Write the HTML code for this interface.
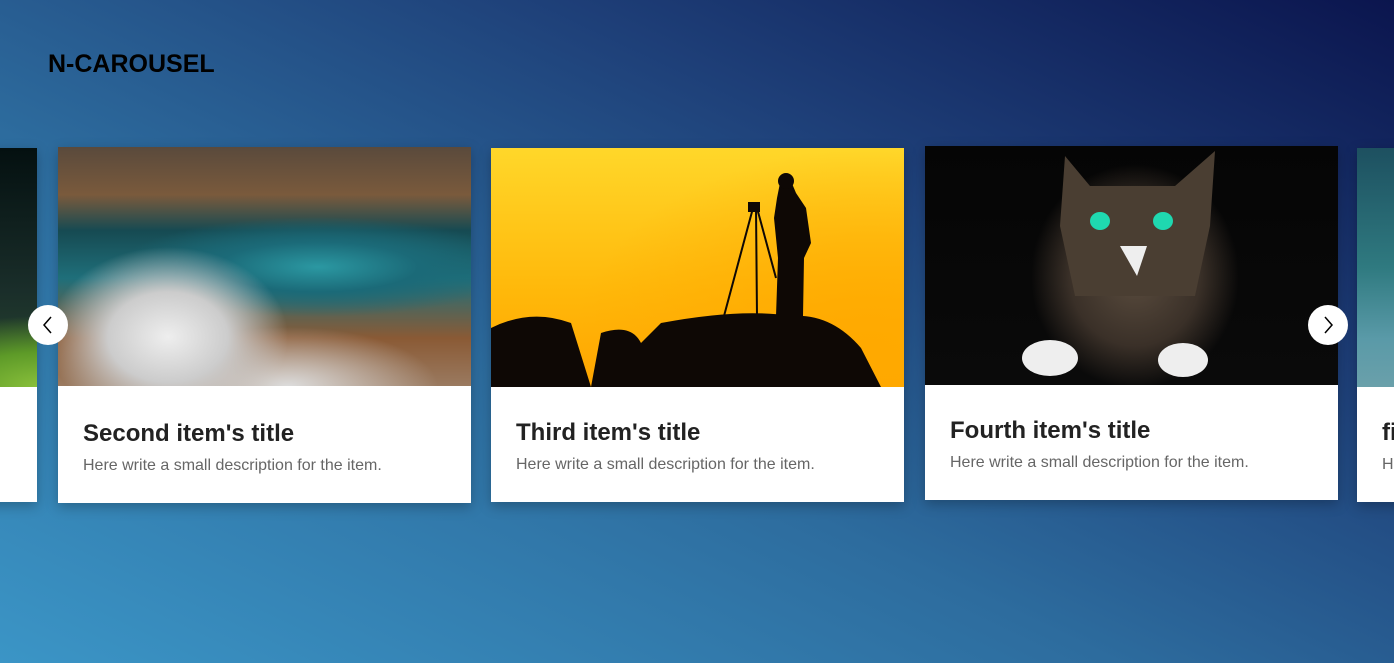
<!DOCTYPE html>
<html><head><meta charset="utf-8"><style>
*{margin:0;padding:0;box-sizing:border-box}
body{width:1394px;height:663px;overflow:hidden;position:relative;font-family:"Liberation Sans",sans-serif;
background:linear-gradient(to top right,#3b95c6 0%,#2d6c9e 40%,#1e3f78 70%,#0b154e 100%);}
h1{position:absolute;left:48px;top:50px;font-size:25px;font-weight:bold;color:#000;letter-spacing:0}
.card{position:absolute;width:413px;background:#fff;box-shadow:0 4px 12px rgba(0,0,0,.25);overflow:hidden}
.img{width:100%;height:239px}
.t{position:absolute;left:25px;font-size:24px;font-weight:bold;color:#222}
.d{position:absolute;left:25px;font-size:16px;color:#666}
.btn{position:absolute;width:40px;height:40px;border-radius:50%;background:#fff;top:305px}
.btn svg{position:absolute;left:12px;top:10px}
</style></head><body>
<h1>N-CAROUSEL</h1>
<div class="card" style="left:-376px;top:148px;height:354px">
<div class="img" style="background:radial-gradient(ellipse 300px 120px at 420px 240px,#8cc23c 0%,#5d9a28 30%,transparent 60%),linear-gradient(#041010,#1a2e2a 60%,#2a4a30)"></div></div>
<div class="card" style="left:58px;top:147px;height:356px">
<div class="img" style="background:radial-gradient(ellipse 120px 90px at 110px 190px,#eee 0%,#ccc 50%,transparent 100%),radial-gradient(ellipse 150px 60px at 230px 240px,#ddd 0%,transparent 100%),radial-gradient(ellipse 200px 50px at 260px 120px,#2b98a2 0%,#1b6a78 50%,transparent 100%),linear-gradient(#5a4a3c 0%,#7a5a3c 20%,#164a52 35%,#1f6f7a 55%,#8a5a35 80%,#9a7a60)"></div>
<div class="t" style="top:273px">Second item's title</div><div class="d" style="top:310px">Here write a small description for the item.</div></div>
<div class="card" style="left:491px;top:148px;height:354px">
<div class="img" style="position:relative;background:radial-gradient(ellipse 300px 200px at 380px 200px,#ffa900,transparent),linear-gradient(#ffd72a,#ffb80a 60%,#ffa500)">
<svg width="413" height="239" style="position:absolute;left:0;top:0"><path d="M0 180 Q40 160 80 175 L100 239 L0 239Z M100 239 L110 185 Q140 175 150 195 L170 175 Q250 160 300 168 Q340 165 370 200 L390 239Z" fill="#0e0805"/><path d="M285 168 L287 110 L283 70 L286 50 L290 30 L297 26 L305 45 L315 60 L320 95 L313 110 L312 168Z" fill="#0e0805"/><circle cx="295" cy="33" r="8" fill="#0e0805"/><path d="M262 60 L233 168 M265 60 L266 168 M266 60 L285 130" stroke="#0e0805" stroke-width="2"/><rect x="257" y="54" width="12" height="10" fill="#0e0805"/></svg></div>
<div class="t" style="top:271px">Third item's title</div><div class="d" style="top:308px">Here write a small description for the item.</div></div>
<div class="card" style="left:925px;top:146px;height:354px">
<div class="img" style="position:relative;background:radial-gradient(ellipse 130px 140px at 210px 130px,#5a4c3e 0%,#3a3028 50%,transparent 80%),linear-gradient(#050505,#0a0a0a)">
<svg width="413" height="239" style="position:absolute;left:0;top:0"><path d="M140 10 L165 40 L250 40 L290 5 L285 80 L270 150 L150 150 L135 80Z" fill="#4a3e32"/><ellipse cx="125" cy="212" rx="28" ry="18" fill="#eee"/><ellipse cx="258" cy="214" rx="25" ry="17" fill="#eee"/><ellipse cx="175" cy="75" rx="10" ry="9" fill="#1fd8b0"/><ellipse cx="238" cy="75" rx="10" ry="9" fill="#1fd8b0"/><path d="M195 100 L222 100 L212 130Z" fill="#eee"/></svg></div>
<div class="t" style="top:271px">Fourth item's title</div><div class="d" style="top:308px">Here write a small description for the item.</div></div>
<div class="card" style="left:1357px;top:148px;height:354px">
<div class="img" style="background:linear-gradient(#1d5060,#2f7a80 50%,#5a9aa8 80%,#6aa0aa)"></div>
<div class="t" style="top:271px">fifth</div><div class="d" style="top:308px">Here</div></div>
<div class="btn" style="left:28px"><svg width="16" height="20"><path d="M11 2 L4 10 L11 18" fill="none" stroke="#000" stroke-width="1.5"/></svg></div>
<div class="btn" style="left:1308px"><svg width="16" height="20"><path d="M5 2 L12 10 L5 18" fill="none" stroke="#000" stroke-width="1.5"/></svg></div>
</body></html>
